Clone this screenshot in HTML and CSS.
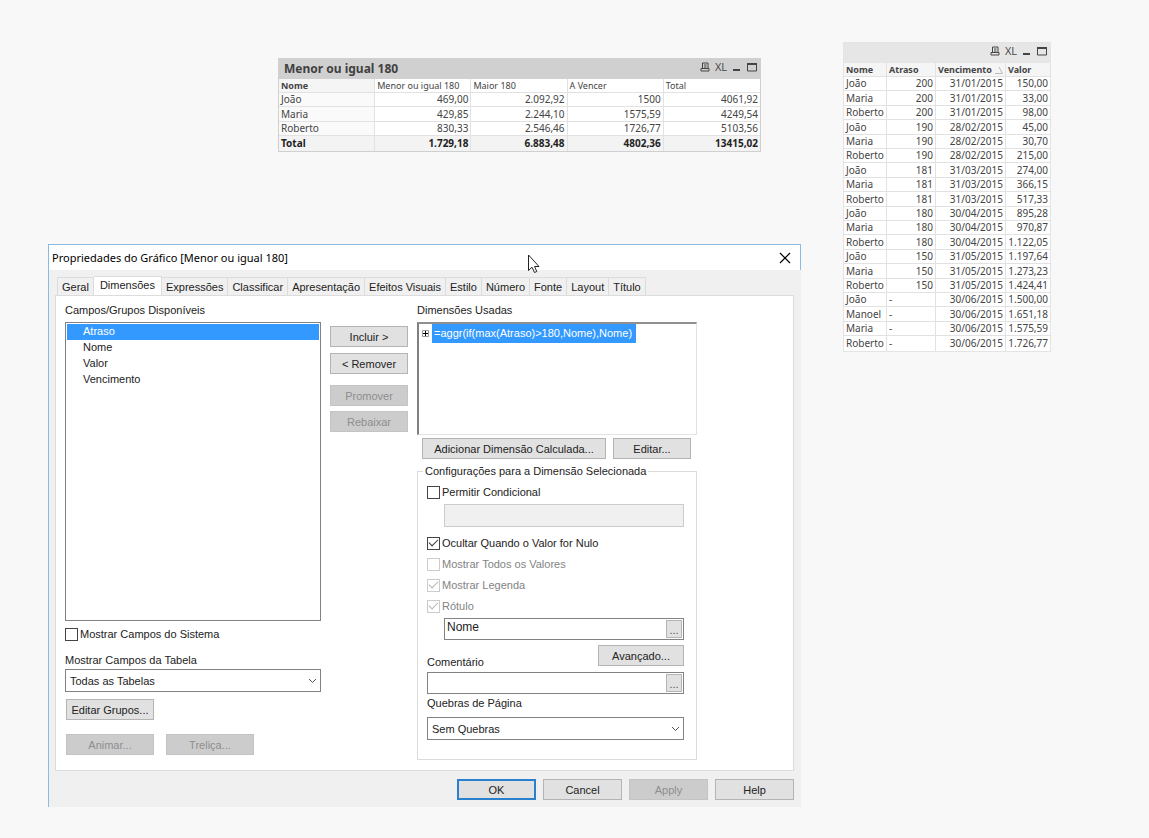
FILE: index.html
```html
<!DOCTYPE html>
<html lang="pt-BR">
<head>
<meta charset="utf-8">
<title>Propriedades do Gráfico</title>
<link rel="stylesheet" href="styles.css">
</head>
<body>
<svg class="defs" aria-hidden="true">
  <symbol id="print" viewBox="0 0 10 10"><path d="M2.500 6V1H8V6M4 3H6.500M4 5H6.500M1 6.500H9V9H1Z" fill="none" stroke="currentColor"/></symbol>
  <symbol id="min" viewBox="0 0 10 10"><path d="M1 7H8V9H1Z" fill="currentColor"/></symbol>
  <symbol id="max" viewBox="0 0 10 10"><path d="M.5 1.500H9.500V9H.5Z" fill="none" stroke="currentColor"/><path d="M0 1H10V3H0Z" fill="currentColor"/></symbol>
  <symbol id="chev" viewBox="0 0 9 6"><path d="M1 1L4.500 4.500L8 1" fill="none" stroke="#555"/></symbol>
</svg>
<main class="desktop">

<section class="sheet summary">
  <header class="caption"><h2>Menor ou igual 180</h2>
    <div class="tools"><button aria-label="Imprimir"><svg><use href="#print"/></svg></button><button>XL</button><button aria-label="Minimizar"><svg><use href="#min"/></svg></button><button aria-label="Maximizar"><svg><use href="#max"/></svg></button></div>
  </header>
  <table class="data">
    <thead><tr><th class="name">Nome</th><th>Menor ou igual 180</th><th>Maior 180</th><th>A Vencer</th><th>Total</th></tr></thead>
    <tbody>
      <tr><td>João</td><td>469,00</td><td>2.092,92</td><td>1500</td><td>4061,92</td></tr>
      <tr><td>Maria</td><td>429,85</td><td>2.244,10</td><td>1575,59</td><td>4249,54</td></tr>
      <tr><td>Roberto</td><td>830,33</td><td>2.546,46</td><td>1726,77</td><td>5103,56</td></tr>
      <tr class="total"><td>Total</td><td>1.729,18</td><td>6.883,48</td><td>4802,36</td><td>13415,02</td></tr>
    </tbody>
  </table>
</section>

<section class="sheet detail">
  <header class="caption">
    <div class="tools"><button aria-label="Imprimir"><svg><use href="#print"/></svg></button><button>XL</button><button aria-label="Minimizar"><svg><use href="#min"/></svg></button><button aria-label="Maximizar"><svg><use href="#max"/></svg></button></div>
  </header>
  <table class="data">
    <colgroup><col class="c1"><col class="c2"><col class="c3"><col class="c4"></colgroup>
    <thead><tr><th>Nome</th><th>Atraso</th><th><span class="sorted">Vencimento<svg viewBox="0 0 8 8"><path d="M0 7.500H7.500L4 1" fill="none" stroke="#bbb"/></svg></span></th><th>Valor</th></tr></thead>
    <tbody>
      <tr><td>João</td><td>200</td><td>31/01/2015</td><td>150,00</td></tr>
      <tr><td>Maria</td><td>200</td><td>31/01/2015</td><td>33,00</td></tr>
      <tr><td>Roberto</td><td>200</td><td>31/01/2015</td><td>98,00</td></tr>
      <tr><td>João</td><td>190</td><td>28/02/2015</td><td>45,00</td></tr>
      <tr><td>Maria</td><td>190</td><td>28/02/2015</td><td>30,70</td></tr>
      <tr><td>Roberto</td><td>190</td><td>28/02/2015</td><td>215,00</td></tr>
      <tr><td>João</td><td>181</td><td>31/03/2015</td><td>274,00</td></tr>
      <tr><td>Maria</td><td>181</td><td>31/03/2015</td><td>366,15</td></tr>
      <tr><td>Roberto</td><td>181</td><td>31/03/2015</td><td>517,33</td></tr>
      <tr><td>João</td><td>180</td><td>30/04/2015</td><td>895,28</td></tr>
      <tr><td>Maria</td><td>180</td><td>30/04/2015</td><td>970,87</td></tr>
      <tr><td>Roberto</td><td>180</td><td>30/04/2015</td><td>1.122,05</td></tr>
      <tr><td>João</td><td>150</td><td>31/05/2015</td><td>1.197,64</td></tr>
      <tr><td>Maria</td><td>150</td><td>31/05/2015</td><td>1.273,23</td></tr>
      <tr><td>Roberto</td><td>150</td><td>31/05/2015</td><td>1.424,41</td></tr>
      <tr><td>João</td><td class="none">-</td><td>30/06/2015</td><td>1.500,00</td></tr>
      <tr><td>Manoel</td><td class="none">-</td><td>30/06/2015</td><td>1.651,18</td></tr>
      <tr><td>Maria</td><td class="none">-</td><td>30/06/2015</td><td>1.575,59</td></tr>
      <tr><td>Roberto</td><td class="none">-</td><td>30/06/2015</td><td>1.726,77</td></tr>
    </tbody>
  </table>
</section>

<section class="dialog" role="dialog" aria-labelledby="dlg-title">
  <header class="titlebar"><h1 id="dlg-title">Propriedades do Gráfico [Menor ou igual 180]</h1>
    <button class="close" aria-label="Fechar"><svg viewBox="0 0 12 12"><path d="M1 1L11 11M11 1L1 11" stroke="#000" stroke-width="1.200"/></svg></button>
  </header>
  <div class="frame">
    <nav class="tabs" role="tablist">
      <button role="tab">Geral</button><button role="tab" class="active" aria-selected="true">Dimensões</button><button role="tab">Expressões</button><button role="tab">Classificar</button><button role="tab">Apresentação</button><button role="tab">Efeitos Visuais</button><button role="tab">Estilo</button><button role="tab">Número</button><button role="tab">Fonte</button><button role="tab">Layout</button><button role="tab">Título</button>
    </nav>
    <div class="page">
      <div class="available">
        <label for="fields">Campos/Grupos Disponíveis</label>
        <select id="fields" class="listbox" size="18"><option selected>Atraso</option><option>Nome</option><option>Valor</option><option>Vencimento</option></select>
        <label class="check system"><input type="checkbox">Mostrar Campos do Sistema</label>
        <label for="tables">Mostrar Campos da Tabela</label>
        <div class="combo"><select id="tables"><option>Todas as Tabelas</option></select><svg><use href="#chev"/></svg></div>
        <div class="row groups"><button class="btn">Editar Grupos...</button></div>
        <div class="row"><button class="btn" disabled>Animar...</button><button class="btn" disabled>Treliça...</button></div>
      </div>
      <div class="movers">
        <button class="btn">Incluir &gt;</button>
        <button class="btn">&lt; Remover</button>
        <button class="btn lower" disabled>Promover</button>
        <button class="btn" disabled>Rebaixar</button>
      </div>
      <div class="used">
        <span>Dimensões Usadas</span>
        <ul class="tree" role="tree" aria-label="Dimensões Usadas">
          <li role="treeitem"><button class="expand" aria-label="Expandir"><svg viewBox="0 0 7 7"><path d="M.5 .5H6.500V6.500H.5Z" fill="#fff" stroke="#999"/><path d="M1 3.500H6M3.500 1V6" stroke="#000"/></svg></button><span class="picked">=aggr(if(max(Atraso)&gt;180,Nome),Nome)</span></li>
        </ul>
        <div class="edit"><button class="btn add">Adicionar Dimensão Calculada...</button><button class="btn">Editar...</button></div>
        <fieldset>
          <legend>Configurações para a Dimensão Selecionada</legend>
          <label class="check"><input type="checkbox">Permitir Condicional</label>
          <input class="text indent cond" type="text" aria-label="Condição" disabled>
          <div class="options">
            <label class="check"><input type="checkbox" checked>Ocultar Quando o Valor for Nulo</label>
            <label class="check"><input type="checkbox" disabled>Mostrar Todos os Valores</label>
            <label class="check"><input type="checkbox" checked disabled>Mostrar Legenda</label>
            <label class="check"><input type="checkbox" checked disabled>Rótulo</label>
          </div>
          <div class="text indent"><input type="text" value="Nome" aria-label="Rótulo"><button>...</button></div>
          <div class="comment"><label for="comment">Comentário</label><button class="btn">Avançado...</button></div>
          <div class="text"><input id="comment" type="text"><button aria-label="Expressão do comentário">...</button></div>
          <label class="breaks" for="breaks">Quebras de Página</label>
          <div class="combo"><select id="breaks"><option>Sem Quebras</option></select><svg><use href="#chev"/></svg></div>
        </fieldset>
      </div>
    </div>
    <footer class="actions"><button class="btn default">OK</button><button class="btn">Cancel</button><button class="btn" disabled>Apply</button><button class="btn">Help</button></footer>
  </div>
</section>

<svg class="cursor" viewBox="0 0 13 20"><path d="M1.500 1V16.500L5 13.200L7.500 18.500L9.800 17.500L7.500 12.500H12Z" fill="#fff" stroke="#222"/></svg>
</main>
</body>
</html>
```

FILE: styles.css
```css
* { box-sizing: border-box; }
body { margin: 0; background: #f8f8f8; color: #222; font: 11px/14px "Liberation Sans", Arial, sans-serif; }
button, input, select { font: inherit; color: inherit; margin: 0; }
h1, h2 { margin: 0; }
.defs { position: absolute; width: 0; height: 0; }
.desktop { position: relative; min-height: 100vh; overflow: hidden; }

/* Sheet tables */
.sheet { position: absolute; border: 1px solid #d0d0d0; font: 9px/13px "Noto Sans", "Open Sans", sans-serif; color: #444; background: #fff; }
.summary { left: 278px; top: 58px; width: 483px; }
.detail { left: 843px; top: 42px; width: 208px; border-color: #e4e4e4; }
.caption { display: flex; align-items: center; height: 20px; padding: 0 3px 0 5px; background: #d0d0d0; }
.detail .caption { background: #e6e6e6; }
.caption h2 { font-size: 12px; line-height: 16px; color: #404040; }
.tools { display: flex; align-items: center; gap: 5px; margin-left: auto; padding-bottom: 4px; }
.tools button { display: flex; padding: 0; border: 0; background: none; color: #444; font: 11px/12px "Liberation Sans Narrow", "Open Sans", sans-serif; }
.tools svg { width: 10px; height: 10px; }
.data { width: 100%; border-collapse: separate; border-spacing: 0; table-layout: fixed; }
.data tr { height: 14px; }
.data tr:nth-child(5n+2), .data tr:nth-child(5n+4) { height: 15px; }
.data th, .data td { padding: 0 2px; border-bottom: 1px solid #e2e2e2; border-right: 1px solid #e2e2e2; text-align: right; white-space: nowrap; }
.data td { font-size: 10px; }
.data th { text-align: left; font-weight: 400; }
.data td:first-child, .data td.none { text-align: left; }
.data tr > :last-child { border-right: 0; }
.data tr:last-child td { border-bottom: 0; }
.data .name, .detail th { font-weight: 700; background: #f5f5f5; }
.summary td:first-child { background: #fafafa; }
.summary .total td { font-weight: 700; background: #f3f3f3; color: #222; }
.c1 { width: 43px; } .c2 { width: 49px; } .c3 { width: 70px; }
.sorted { display: flex; align-items: center; justify-content: space-between; }
.sorted svg { width: 8px; height: 8px; }

/* Dialog */
.dialog { position: absolute; left: 48px; top: 244px; width: 753px; border-left: 1px solid #8cbbe0; }
.titlebar { display: flex; align-items: center; justify-content: space-between; height: 26px; padding: 0 9px 0 3px; background: #fff; border-top: 1px solid #8cbbe0; border-right: 1px solid #8cbbe0; }
.titlebar h1 { font: 11px/16px "Noto Sans", "Open Sans", sans-serif; color: #000; }
.close { display: flex; padding: 0; border: 0; background: none; }
.close svg { width: 12px; height: 12px; }
.frame { padding: 6px 7px 7px 6px; background: #f0f0f0; }
.tabs { display: flex; align-items: flex-end; padding-left: 2px; }
.tabs button { height: 18px; padding: 0 4px; border: 1px solid #dcdcdc; border-width: 1px 1px 0 0; background: #f0f0f0; }
.tabs button:first-child { border-left-width: 1px; }
.tabs .active { height: 19px; padding: 0 6px 2px; background: #fff; }
.page { display: flex; gap: 9px; padding: 7px 9px 10px; border: 1px solid #dcdcdc; background: #fff; }
.available { display: flex; flex-direction: column; width: 256px; }
.listbox { height: 299px; margin: 5px 0 6px; padding: 1px; border: 1px solid #828282; border-radius: 0; background: #fff; overflow: hidden; outline: 0; }
.listbox option { min-height: 16px; padding: 1px 0 1px 16px; line-height: 14px; }
.listbox option:checked { background: #3399ff linear-gradient(#3399ff, #3399ff); color: #fff; }
.check { display: flex; align-items: center; gap: 2px; height: 14px; }
.check:has(:disabled) { color: #838383; }
.check input { appearance: none; display: grid; place-items: center; width: 13px; height: 13px; border: 1px solid #444; background: #fff; }
.check input:checked::before { content: ""; width: 8px; height: 4px; margin-top: -3px; border: solid #333; border-width: 0 0 1px 1px; transform: rotate(-45deg); }
.check input:disabled { border-color: #ccc; }
.check input:disabled::before { border-color: #b4b4b4; }
.system { margin-bottom: 12px; }
.combo { display: grid; align-items: center; margin-top: 2px; }
.combo > * { grid-area: 1 / 1; }
.combo select { appearance: none; width: 100%; height: 23px; padding: 0 4px; border: 1px solid #828282; border-radius: 0; background: #fff; }
.combo svg { width: 9px; height: 6px; margin-right: 4px; justify-self: end; pointer-events: none; }
.row { display: flex; gap: 12px; padding-left: 1px; }
.row .btn { width: 88px; }
.groups { margin: 7px 0 14px; }
.btn { height: 21px; padding: 0 4px; border: 1px solid #b4b4b4; background: #e1e1e1; white-space: nowrap; }
.btn:disabled { background: #ccc; border-color: #c4c4c4; color: #8e8e8e; }
.movers { display: flex; flex-direction: column; gap: 5px; width: 78px; padding-top: 23px; }
.movers .btn + .btn { margin-top: 1px; }
.movers .btn.lower { margin-top: 6px; }
.movers .btn.lower + .btn { margin-top: 0; }
.used { width: 280px; }
.used > span { display: block; }
.tree { height: 113px; margin: 5px 0 3px; padding: 0; border: 1px solid #e2e2e2; border-top: 2px solid #909090; border-left: 2px solid #808080; list-style: none; }
.tree li { display: flex; align-items: center; gap: 3px; padding-left: 3px; }
.expand { display: flex; padding: 0; border: 0; background: none; }
.expand svg { width: 7px; height: 7px; }
.picked { padding: 2px 4px 3px 2px; background: #3399ff; color: #fff; }
.edit { display: flex; gap: 7px; padding: 0 6px 0 5px; }
.edit .btn { flex: 0 0 78px; }
.edit .add { flex: 1; }
fieldset { margin: 5px 0 0; padding: 7px 12px 19px 9px; border: 1px solid #dcdcdc; min-width: 0; }
legend { margin-left: -4px; padding: 0 2px; }
.text { display: flex; align-items: center; height: 22px; border: 1px solid #828282; background: #fff; }
.text input { flex: 1; min-width: 0; height: 18px; padding: 0 2px 4px; border: 0; background: none; outline: 0; font-size: 12px; }
.text button { width: 16px; height: 18px; margin-right: 1px; padding: 2px 0 0; border: 1px solid #b4b4b4; background: #e1e1e1; color: #555; }
.indent { margin-left: 17px; }
.cond { display: block; width: calc(100% - 17px); height: 23px; margin-top: 5px; border-color: #ccc; background: #f0f0f0; }
.options { display: grid; gap: 7px; margin: 9px 0 5px; }
.comment { display: flex; justify-content: space-between; align-items: flex-end; margin: 5px 0 3px; }
.comment .btn { width: 86px; margin-bottom: 3px; }
.breaks { display: block; margin: 2px 0 7px; }
fieldset .combo { margin: 0; }
.actions { display: flex; justify-content: flex-end; gap: 7px; padding-top: 8px; }
.actions .btn { width: 79px; }
.actions .default { border: 2px solid #2a80cc; }
.cursor { position: absolute; left: 527px; top: 254px; width: 13px; height: 20px; }
```
